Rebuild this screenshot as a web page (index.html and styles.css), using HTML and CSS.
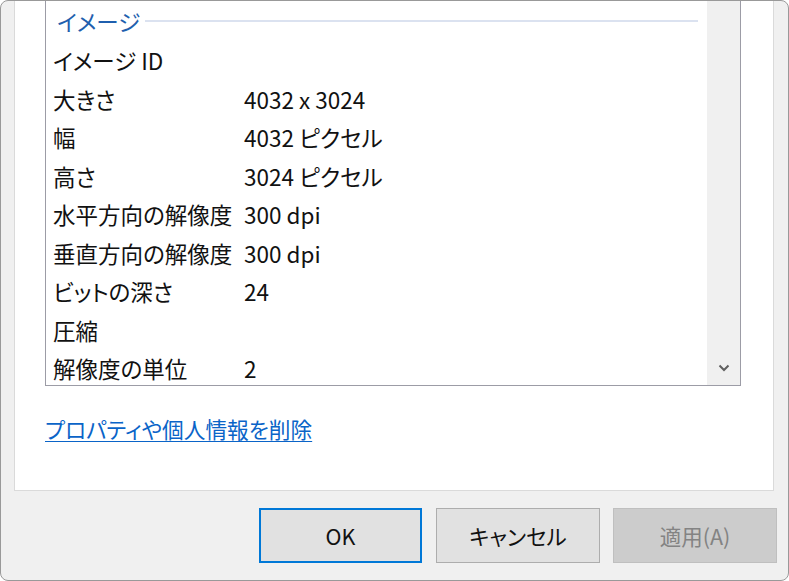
FILE: index.html
```html
<!DOCTYPE html>
<html lang="ja">
<head>
<meta charset="utf-8">
<link rel="stylesheet" href="styles.css">
</head>
<body>
<div class="window">
  <div class="panel">
    <div class="listbox">
      <div class="list">
        <div class="group-header">
          <span class="group-title">イメージ</span>
          <span class="group-line"></span>
        </div>
        <div class="row"><span class="label">イメージ ID</span><span class="value"></span></div>
        <div class="row"><span class="label">大きさ</span><span class="value">4032 x 3024</span></div>
        <div class="row"><span class="label">幅</span><span class="value">4032 ピクセル</span></div>
        <div class="row"><span class="label">高さ</span><span class="value">3024 ピクセル</span></div>
        <div class="row"><span class="label">水平方向の解像度</span><span class="value">300 dpi</span></div>
        <div class="row"><span class="label">垂直方向の解像度</span><span class="value">300 dpi</span></div>
        <div class="row"><span class="label">ビットの深さ</span><span class="value">24</span></div>
        <div class="row"><span class="label">圧縮</span><span class="value"></span></div>
        <div class="row"><span class="label">解像度の単位</span><span class="value">2</span></div>
      </div>
      <div class="scrollbar">
        <svg class="chevron" width="12" height="8" viewBox="0 0 12 8"><path d="M1.5 1.5 L6 6 L10.5 1.5" fill="none" stroke="#606060" stroke-width="2"/></svg>
      </div>
    </div>
    <a class="link" href="#">プロパティや個人情報を削除</a>
  </div>
  <div class="buttons">
    <button class="btn btn-default">OK</button>
    <button class="btn btn-cancel">キャンセル</button>
    <button class="btn btn-disabled">適用(A)</button>
  </div>
</div>
</body>
</html>
```
FILE: styles.css
```css
html, body {
  margin: 0;
  padding: 0;
  background: #ffffff;
}
body {
  font-family: "Noto Sans CJK JP", "Noto Sans", sans-serif;
  font-feature-settings: "palt";
  color: #111111;
}
.window {
  width: 789px;
  height: 581px;
  box-sizing: border-box;
  border: 1px solid #999999;
  border-radius: 8px;
  background: #f0f0f0;
  display: flex;
  flex-direction: column;
  overflow: hidden;
}
.panel {
  margin-left: 13px;
  width: 760px;
  height: 490px;
  box-sizing: border-box;
  background: #ffffff;
  border: 1px solid #dadada;
  border-top: none;
  padding-left: 30px;
  display: flex;
  flex-direction: column;
}
.listbox {
  width: 696px;
  height: 385px;
  box-sizing: border-box;
  border: 1px solid #9c9ca6;
  border-top: none;
  display: flex;
}
.list {
  flex: 1;
  padding-left: 7px;
  padding-right: 9px;
  font-size: 22.5px;
}
.group-header {
  height: 40px;
  display: flex;
  align-items: center;
  padding-left: 4px;
}
.group-title {
  flex: none;
  white-space: nowrap;
  color: #1f5fae;
  line-height: 1;
}
.group-line {
  flex: 1;
  height: 2px;
  margin-left: 5px;
  background: #dbe2f0;
}
.row {
  height: 38.5px;
  display: flex;
  align-items: center;
  line-height: 1;
  box-sizing: border-box;
}
.label {
  width: 191px;
  flex: none;
  white-space: nowrap;
}
.value {
  white-space: nowrap;
}
.scrollbar {
  width: 33px;
  flex: none;
  background: #f0f0f0;
  display: flex;
  align-items: flex-end;
  justify-content: center;
  padding-bottom: 13px;
  box-sizing: border-box;
}
.chevron {
  display: block;
  margin-left: 1px;
}
.link {
  margin-top: 32px;
  align-self: flex-start;
  font-size: 21.7px;
  line-height: 1;
  color: #0a64c8;
  text-decoration: underline;
  text-underline-offset: 3px;
  text-decoration-thickness: 1px;
}
.buttons {
  display: flex;
  justify-content: flex-end;
  margin-top: 17px;
  padding-right: 11px;
}
.btn {
  width: 164px;
  height: 55px;
  box-sizing: border-box;
  border: 1px solid #adadad;
  background: #e1e1e1;
  font-family: "Noto Sans CJK JP", "Noto Sans", sans-serif;
  font-feature-settings: "palt";
  font-size: 21.5px;
  color: #111111;
  padding: 0;
  margin: 0;
}
.btn-default {
  width: 163px;
  border: 2px solid #0078d7;
}
.btn-cancel {
  margin-left: 14px;
}
.btn-disabled {
  margin-left: 13px;
  background: #cccccc;
  border-color: #bfbfbf;
  color: #838383;
}
```
